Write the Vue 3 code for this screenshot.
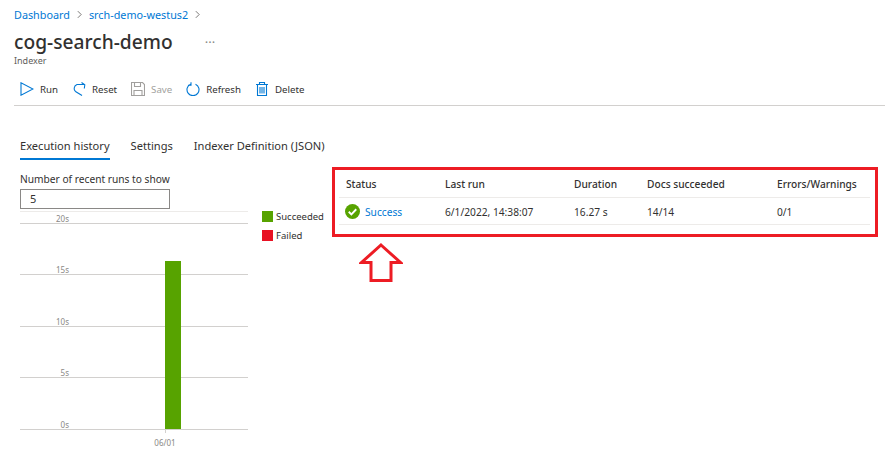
<script setup>
const columns = ['Status', 'Last run', 'Duration', 'Docs succeeded', 'Errors/Warnings']
const grid = [
  { y: 14, label: '20s' },
  { y: 65, label: '15s' },
  { y: 117, label: '10s' },
  { y: 168, label: '5s' },
  { y: 220, label: '0s' }
]
</script>

<template>
  <div class="page">
    <nav class="crumbs">
      <a>Dashboard</a>
      <svg class="chev" viewBox="0 0 6 10"><path d="M1 1l4 4-4 4" /></svg>
      <a>srch-demo-westus2</a>
      <svg class="chev" viewBox="0 0 6 10"><path d="M1 1l4 4-4 4" /></svg>
    </nav>
    <div class="title-row">
      <h1>cog-search-demo</h1>
      <span class="more">···</span>
    </div>
    <div class="subtitle">Indexer</div>

    <div class="toolbar">
      <button class="tool">
        <svg viewBox="0 0 14 14"><path class="blue" d="M1 .8v12.400L13 7z" /></svg>
        <span>Run</span>
      </button>
      <button class="tool">
        <svg viewBox="0 0 14 14"><path class="blue" d="M10 13.500L3.500 9.500C1.500 8 1.500 4 5 2.500H12.500M9.500 .5l3.300 2.300-.5 3.700" /></svg>
        <span>Reset</span>
      </button>
      <button class="tool off">
        <svg viewBox="0 0 14 14"><path class="grey" d="M.5.5h11l2 2v11H.5zM3.500.5v4h6v-4M3 13.500v-5h8v5" /></svg>
        <span>Save</span>
      </button>
      <button class="tool">
        <svg viewBox="0 0 14 14"><path class="blue" d="M4.500 2.200a6 6 0 1 0 5 0M5 .2v3H2" /></svg>
        <span>Refresh</span>
      </button>
      <button class="tool">
        <svg viewBox="0 0 14 14"><path class="blue" d="M1 2.500h12M4.500 2.500v-2h5v2M2.500 2.500v11h9v-11M5 5v6.500M7 5v6.500M9 5v6.500" /></svg>
        <span>Delete</span>
      </button>
    </div>

    <div class="content">
      <div class="tabs">
        <div class="tab active">Execution history</div>
        <div class="tab">Settings</div>
        <div class="tab">Indexer Definition (JSON)</div>
      </div>

      <div class="body">
        <div class="left">
          <label class="runs-label">Number of recent runs to show</label>
          <div class="input">5</div>
          <svg class="chart" viewBox="0 0 240 240" width="240" height="240">
            <g v-for="g in grid" :key="g.label">
              <line x1="0" x2="228" :y1="g.y + 0.5" :y2="g.y + 0.5" class="gridline" />
              <text x="49" :y="g.y - 1.5" text-anchor="end" class="axis">{{ g.label }}</text>
            </g>
            <line x1="0" x2="228" y1="2.500" y2="2.500" class="gridline pale" />
            <rect x="145" y="52" width="16" height="168" class="bar" />
            <line x1="145.500" x2="145.500" y1="221" y2="224" class="gridline" />
            <text x="145" y="237" text-anchor="middle" class="axis">06/01</text>
          </svg>
        </div>

        <ul class="legend">
          <li><i class="sw green"></i>Succeeded</li>
          <li><i class="sw red"></i>Failed</li>
        </ul>

        <div class="right">
          <div class="panel">
            <div class="row head">
              <div v-for="c in columns" :key="c" class="cell">{{ c }}</div>
            </div>
            <div class="row data">
              <div class="cell status">
                <svg class="ok" viewBox="0 0 16 16">
                  <circle cx="8" cy="8" r="8" fill="#57a300" />
                  <path d="M4 8.300l2.800 2.800L12 5.600" fill="none" stroke="#fff" stroke-width="2" />
                </svg>
                <a>Success</a>
              </div>
              <div class="cell">6/1/2022, 14:38:07</div>
              <div class="cell">16.27 s</div>
              <div class="cell">14/14</div>
              <div class="cell">0/1</div>
            </div>
          </div>
          <svg class="arrow" viewBox="0 0 44 39">
            <path d="M22 2L41.500 19.500H32V37.500H12V19.500H2.500z" fill="#fff" stroke="#ed1c24" stroke-width="3" />
          </svg>
        </div>
      </div>
    </div>
  </div>
</template>

<style>
html, body { margin: 0; background: #fff; }
</style>

<style scoped>
.page {
  width: 885px;
  height: 462px;
  overflow: hidden;
  box-sizing: border-box;
  padding: 7px 0 0 14px;
  font-family: "Noto Sans", "Open Sans", sans-serif;
  font-size: 10px;
  color: #323130;
  background: #fff;
}
.crumbs { display: flex; align-items: center; gap: 7px; height: 14px; font-size: 10.8px; color: #0078d4; }
.chev { width: 5px; height: 9px; fill: none; stroke: #605e5c; stroke-width: 1; }
.title-row { display: flex; align-items: center; margin-top: 8px; height: 26px; }
h1 { margin: 0; font-size: 19.2px; font-weight: 500; color: #323130; line-height: 26px; }
.more { margin-left: 32px; color: #8a8886; font-size: 13px; line-height: 10px; }
.subtitle { font-size: 9px; color: #605e5c; line-height: 12px; }
.toolbar {
  display: flex;
  align-items: center;
  gap: 14px;
  margin-top: 13px;
  height: 18px;
  padding: 0 0 7px 6px;
  font-size: 9.7px;
  border-bottom: 1px solid #d2d0ce;
}
.tool { display: flex; align-items: center; gap: 6px; padding: 0; border: 0; background: none; font: inherit; color: #323130; }
.tool svg { width: 14px; height: 14px; }
.tool.off { color: #a19f9d; }
.blue, .grey { fill: none; stroke-width: 1.1; }
.blue { stroke: #0078d4; }
.grey { stroke: #a19f9d; }
.content { padding: 32px 0 0 6px; }
.tabs { display: flex; gap: 21px; font-size: 11.1px; height: 22px; }
.tab { color: #323130; padding-bottom: 5px; line-height: 15px; }
.tab.active { border-bottom: 2px solid #0078d4; }
.body { display: flex; align-items: flex-start; }
.left { width: 242px; flex: none; }
.runs-label { display: block; margin-top: 12px; line-height: 14px; font-size: 10.2px; }
.input {
  box-sizing: border-box;
  width: 150px;
  height: 20px;
  margin-top: 3px;
  padding-left: 9px;
  line-height: 18px;
  border: 1px solid #8a8886;
  font-size: 11px;
}
.chart { display: block; }
.gridline { stroke: #d2d0ce; stroke-width: 1; }
.pale { stroke: #edebe9; }
.axis { font-size: 8px; fill: #8a8886; font-family: "Noto Sans", sans-serif; }
.bar { fill: #57a300; }
.legend { list-style: none; margin: 47px 0 0 0; padding: 0; width: 70px; flex: none; font-size: 9.5px; }
.legend li { display: flex; align-items: center; gap: 3px; height: 19px; white-space: nowrap; }
.sw { width: 11px; height: 11px; display: block; }
.green { background: #57a300; }
.red { background: #e81123; }
.right { flex: none; width: 546px; margin-top: 7px; font-size: 10.2px; }
.panel { box-sizing: border-box; width: 546px; height: 70px; padding: 0 5px 0 4px; border: 3px solid #ed1c24; }
.row { display: grid; grid-template-columns: 99px 129px 73px 130px 1fr; align-items: center; padding-left: 7px; }
.head { height: 28px; box-sizing: border-box; border-bottom: 1px solid #edebe9; font-weight: 500; }
.data { height: 27px; box-sizing: border-box; padding-top: 1px; border-bottom: 1px solid #edebe9; }
.status { display: flex; align-items: center; gap: 5px; margin-left: -1px; color: #0078d4; }
.ok { width: 15px; height: 15px; }
.arrow { display: block; width: 44px; height: 39px; margin: 6px 0 0 27px; }
</style>
